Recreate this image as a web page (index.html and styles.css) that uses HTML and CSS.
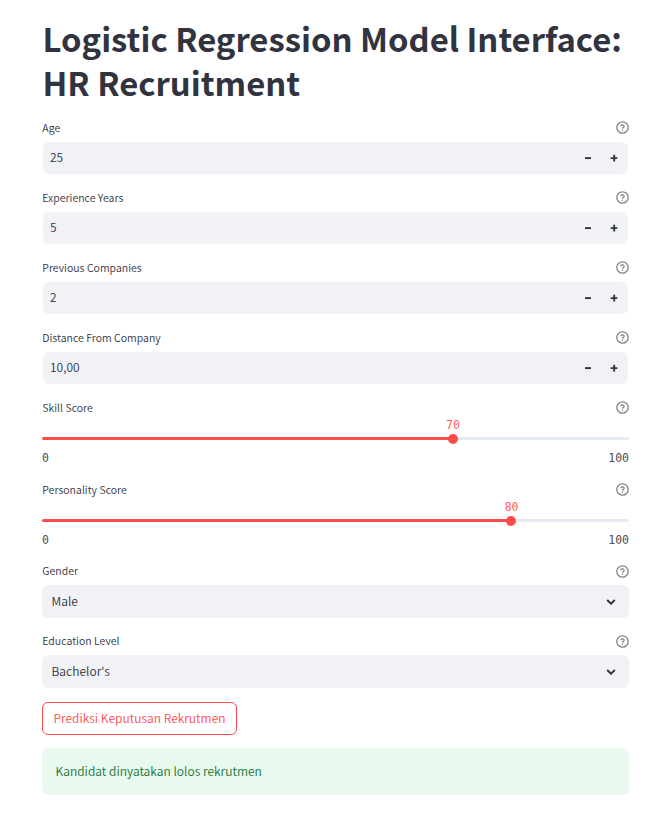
FILE: index.html
```html
<!DOCTYPE html>
<html lang="id">
<head>
<meta charset="utf-8">
<title>HR Recruitment</title>
<link rel="stylesheet" href="styles.css">
</head>
<body>
<svg class="defs" aria-hidden="true">
  <symbol id="help" viewBox="0 0 24 24"><g fill="none" stroke="currentColor" stroke-width="2.5" stroke-linecap="round" stroke-linejoin="round"><circle cx="12" cy="12" r="10.5"/><path d="M9.09 9a3 3 0 0 1 5.83 1c0 2-3 3-3 3"/><path d="M12 17h.01"/></g></symbol>
  <symbol id="minus" viewBox="0 0 8 8"><path d="M1 4.1h6" stroke="currentColor" stroke-width="1.9"/></symbol>
  <symbol id="plus" viewBox="0 0 8 8"><path d="M.7 4.1h6.6M4.2 .8v6.6" stroke="currentColor" stroke-width="1.9"/></symbol>
  <symbol id="chevron" viewBox="0 0 10 6"><path d="M1.2 1 5 4.7 8.8 1" fill="none" stroke="currentColor" stroke-width="1.9"/></symbol>
</svg>
<main class="page">
  <h1 class="title">Logistic Regression Model Interface:<br>HR Recruitment</h1>
  <section class="field">
    <div class="label"><span>Age</span><svg class="help"><use href="#help"/></svg></div>
    <div class="number"><span class="value">25</span><svg class="step"><use href="#minus"/></svg><svg class="step"><use href="#plus"/></svg></div>
  </section>
  <section class="field">
    <div class="label"><span>Experience Years</span><svg class="help"><use href="#help"/></svg></div>
    <div class="number"><span class="value">5</span><svg class="step"><use href="#minus"/></svg><svg class="step"><use href="#plus"/></svg></div>
  </section>
  <section class="field">
    <div class="label"><span>Previous Companies</span><svg class="help"><use href="#help"/></svg></div>
    <div class="number"><span class="value">2</span><svg class="step"><use href="#minus"/></svg><svg class="step"><use href="#plus"/></svg></div>
  </section>
  <section class="field">
    <div class="label"><span>Distance From Company</span><svg class="help"><use href="#help"/></svg></div>
    <div class="number"><span class="value">10,00</span><svg class="step"><use href="#minus"/></svg><svg class="step"><use href="#plus"/></svg></div>
  </section>
  <section class="field slider-field">
    <div class="label"><span>Skill Score</span><svg class="help"><use href="#help"/></svg></div>
    <div class="slider" style="--v:70%"><span class="thumb"></span><span class="tip">70</span></div>
    <div class="range"><span>0</span><span>100</span></div>
  </section>
  <section class="field slider-field last">
    <div class="label"><span>Personality Score</span><svg class="help"><use href="#help"/></svg></div>
    <div class="slider" style="--v:80%"><span class="thumb"></span><span class="tip">80</span></div>
    <div class="range"><span>0</span><span>100</span></div>
  </section>
  <section class="field select-field">
    <div class="label"><span>Gender</span><svg class="help"><use href="#help"/></svg></div>
    <div class="select"><span>Male</span><svg class="chevron"><use href="#chevron"/></svg></div>
  </section>
  <section class="field select-field">
    <div class="label"><span>Education Level</span><svg class="help"><use href="#help"/></svg></div>
    <div class="select"><span>Bachelor's</span><svg class="chevron"><use href="#chevron"/></svg></div>
  </section>
  <button class="predict">Prediksi Keputusan Rekrutmen</button>
  <div class="alert">Kandidat dinyatakan lolos rekrutmen</div>
</main>
</body>
</html>
```
FILE: styles.css
```css
* { box-sizing: border-box; }
body { margin: 0; background: #fff; color: #31333f; font: 350 12px/20px "Noto Sans CJK SC", "Noto Sans", sans-serif; letter-spacing: 0.03px; }
.defs { display: none; }
.page { width: 587px; margin: 0 0 0 42px; padding-top: 16px; }
.title { margin: 0 0 16px; padding-left: 0.5px; font-size: 32.85px; line-height: 44px; font-weight: 700; letter-spacing: 0; white-space: nowrap; }
.field { height: 54px; margin-bottom: 16px; }
.label { display: flex; justify-content: space-between; align-items: center; height: 16px; margin-bottom: 6px; padding-left: 0.3px; font-size: 10.5px; line-height: 16px; }
.help { width: 13px; height: 13px; margin-bottom: 1px; color: #85868d; overflow: visible; }
.number { display: flex; align-items: center; height: 32px; margin: 0 1px; padding: 0 10px 0 7px; border-radius: 6px; background: #f0f2f6; }
.value { flex: 1; padding-bottom: 2px; }
.step { width: 8px; height: 8px; margin-left: 18.5px; }
.slider-field { height: 66px; }
.slider-field.last { height: 65px; }
.slider { position: relative; height: 3px; margin-top: 21px; border-radius: 2px; background: linear-gradient(to right, #ff4b4b var(--v), #e6eaf1 var(--v)); }
.thumb { position: absolute; left: var(--v); top: -3.5px; width: 10px; height: 10px; margin-left: -5.2px; border-radius: 50%; background: #ff4b4b; }
.tip, .range { font: 400 11.5px/14px "DejaVu Sans Mono", monospace; letter-spacing: 0; }
.tip { position: absolute; left: var(--v); bottom: 8px; transform: translateX(-50%); color: #ff6060; }
.range { display: flex; justify-content: space-between; margin-top: 11px; color: #4b4d58; }
.select-field { height: 55px; margin-bottom: 15px; }
.select-field .help { margin-bottom: -1px; }
.select { display: flex; align-items: center; justify-content: space-between; height: 33px; padding: 0 13px 0 9.5px; border-radius: 6px; background: #f0f2f6; }
.select span { padding-bottom: 1px; }
.chevron { width: 10px; height: 6px; }
.predict { display: block; width: 195px; height: 33px; margin: -1px 0 13px; padding: 0 0 2px; border: 1px solid #ff4b4b; border-radius: 6px; background: #fff; color: #ff4b4b; font: inherit; letter-spacing: 0.03px; white-space: nowrap; }
.alert { height: 47px; padding: 0 13.5px; border-radius: 6px; background: #e8f9ee; color: #177233; line-height: 46px; }
```
